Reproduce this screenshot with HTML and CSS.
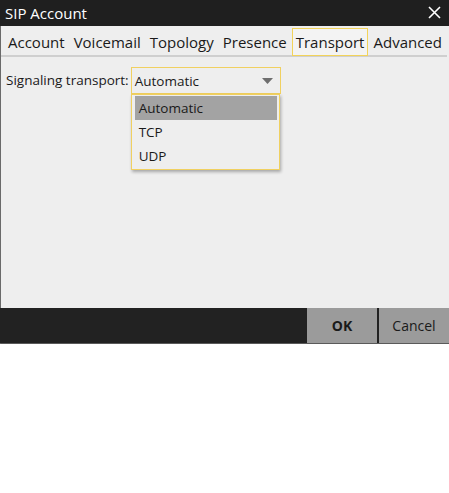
FILE: index.html
```html
<!DOCTYPE html>
<html>
<head>
<meta charset="utf-8">
<title>SIP Account</title>
<link rel="stylesheet" href="styles.css">
</head>
<body>
<div class="dialog">
  <div class="titlebar">
    <span class="title">SIP Account</span>
    <svg class="close" width="13" height="13" viewBox="0 0 13 13"><path d="M1 1L12 12M12 1L1 12" stroke="#fff" stroke-width="1.6" fill="none"/></svg>
  </div>
  <div class="tabs">
    <span class="tab">Account</span>
    <span class="tab">Voicemail</span>
    <span class="tab">Topology</span>
    <span class="tab">Presence</span>
    <span class="tab active">Transport</span>
    <span class="tab">Advanced</span>
  </div>
  <div class="content">
    <div class="row">
      <span class="label">Signaling transport:</span>
      <div class="combo-wrap">
        <div class="combo">
          <span>Automatic</span>
          <svg class="arrow" width="11" height="6" viewBox="0 0 11 6"><path d="M0 0H11L5.5 6Z" fill="#6e6e6e"/></svg>
        </div>
        <div class="menu">
          <div class="item selected">Automatic</div>
          <div class="item">TCP</div>
          <div class="item">UDP</div>
        </div>
      </div>
    </div>
  </div>
  <div class="footer">
    <button class="btn ok">OK</button>
    <button class="btn">Cancel</button>
  </div>
</div>
</body>
</html>
```
FILE: styles.css
```css
* { box-sizing: border-box; }
html, body { margin: 0; padding: 0; background: #fff; }
body { font-family: "Open Sans", "Noto Sans", sans-serif; color: #1a1a1a; }
.dialog {
  width: 449px;
  height: 344px;
  display: flex;
  flex-direction: column;
  background: #eeeeee;
  border-left: 1px solid #6a6a6a;
  border-bottom: 1px solid #5a5a5a;
}
.titlebar {
  height: 26px;
  background: #1f1f1f;
  color: #fff;
  display: flex;
  align-items: center;
  justify-content: space-between;
  padding: 0 8px 0 5px;
  margin-left: -1px;
}
.title { font-size: 15px; }
.close { margin-top: -1px; }
.tabs {
  display: flex;
  height: 31px;
  padding: 2px 0 0 3px;
  border-bottom: 2px solid #cfcfcf;
  margin-right: 2px;
}
.tab {
  font-size: 15px;
  padding: 0 3px;
  margin-right: 1px;
  border: 1px solid transparent;
  height: 28px;
  line-height: 26px;
  color: #1a1a1a;
  white-space: nowrap;
}
.tab.active { border-color: #f2d35a; background: #f3f3f3; }
.content { flex: 1; padding: 10px 5px 0; }
.row { display: flex; align-items: flex-start; }
.label { font-size: 13.5px; line-height: 27px; margin-right: 2px; }
.combo-wrap { position: relative; }
.combo {
  width: 150px;
  height: 27px;
  border: 1px solid #f0d060;
  display: flex;
  align-items: center;
  justify-content: space-between;
  padding: 0 7px 0 3px;
  font-size: 13.5px;
}
.menu {
  position: absolute;
  top: 27px;
  left: 0;
  width: 149px;
  border: 1px solid #f0d060;
  background: #eeeeee;
  padding: 1px 2px 1px 3px;
  box-shadow: 1px 2px 3px rgba(0,0,0,0.3);
  font-size: 13.5px;
}
.item { height: 24px; line-height: 24px; padding: 0 4px; }
.item.selected { background: #a3a3a3; }
.footer {
  height: 35px;
  background: #222222;
  display: flex;
  justify-content: flex-end;
  margin-left: -1px;
}
.btn {
  width: 70px;
  height: 35px;
  border: none;
  background: #9b9b9b;
  font-family: inherit;
  font-size: 14px;
  color: #1a1a1a;
  margin-left: 2px;
  padding: 0;
}
.btn.ok { font-weight: bold; }
```
